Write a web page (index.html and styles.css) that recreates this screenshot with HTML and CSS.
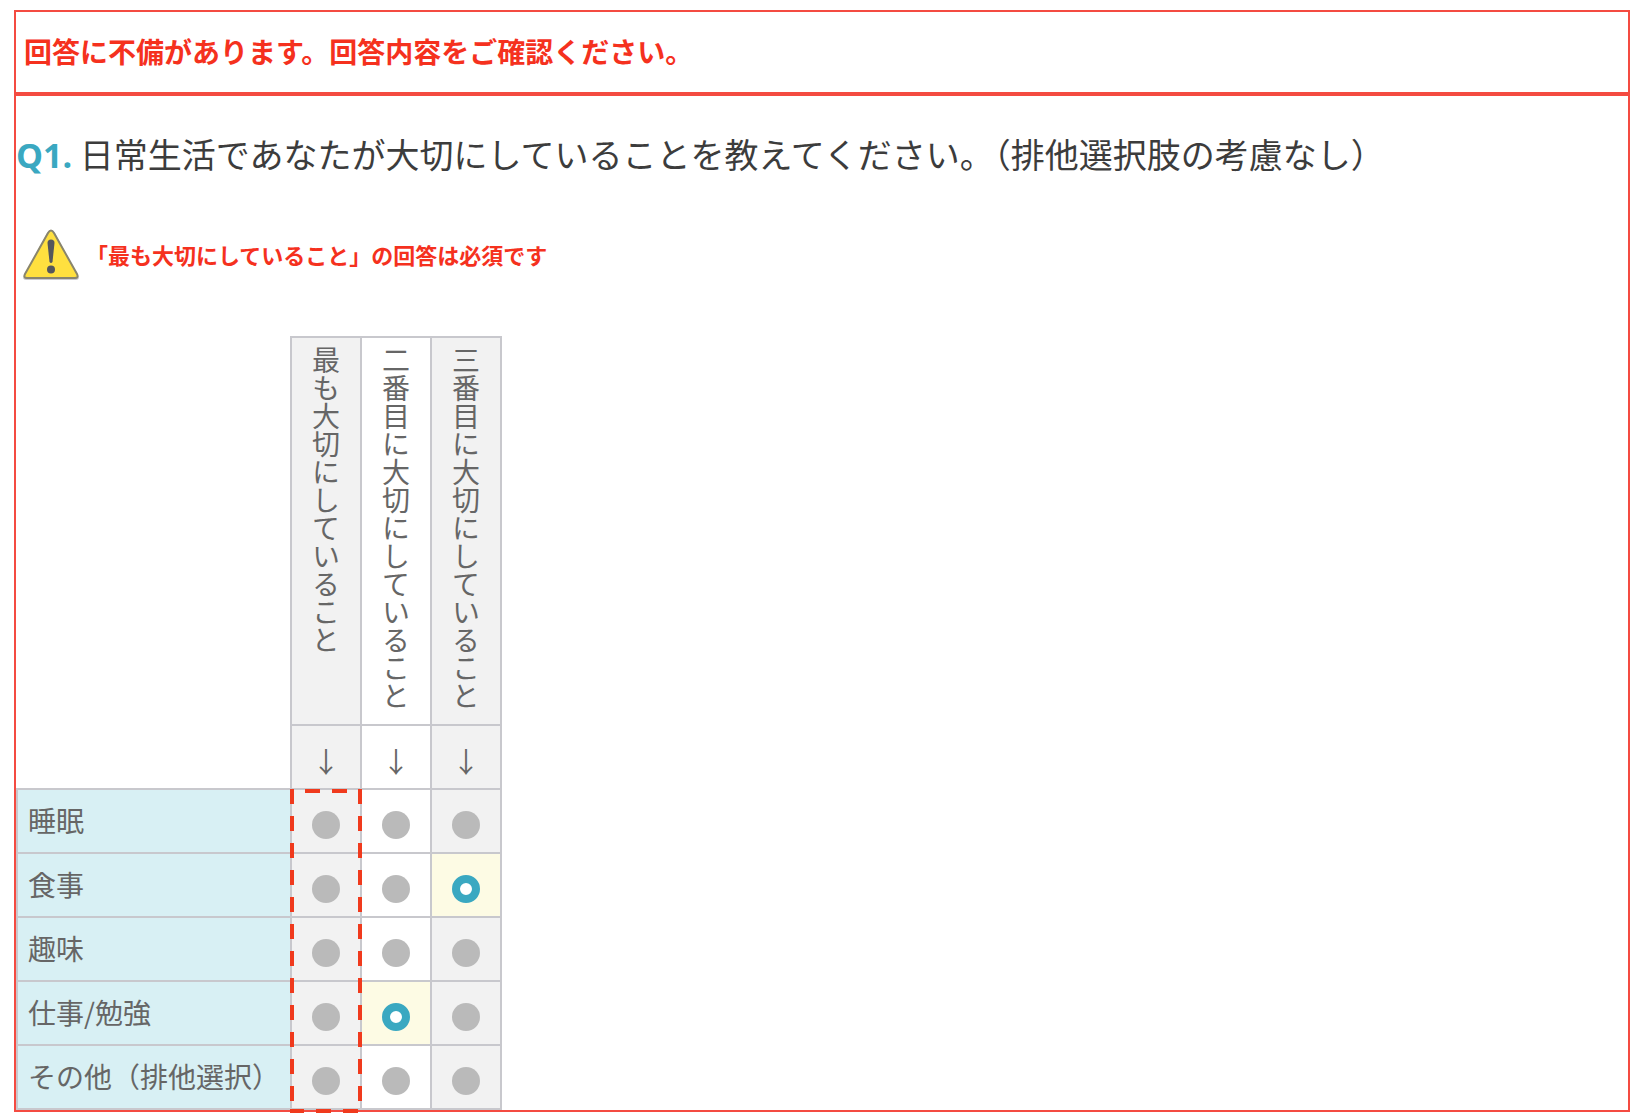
FILE: index.html
```html
<!DOCTYPE html>
<html lang="ja">

<head>
   <meta charset="UTF-8">
   <meta name="viewport" content="width=device-width, initial-scale=1.0">
   <title>アンケート</title>
   <link rel="stylesheet" href="styles.css">
</head>

<body>
   <main>
      <div class="alert" role="alert">
         <p>回答に不備があります。回答内容をご確認ください。</p>
      </div>
      <form class="question">
         <h1><span class="number">Q1.</span> 日常生活であなたが大切にしていることを教えてください。（排他選択肢の考慮なし）</h1>
         <div class="error">
            <svg class="warning" viewBox="0 0 58 54" aria-hidden="true">
               <path d="M4 53H54Q58 53 56 49L33 6Q29 0 25 6L2 49Q0 53 4 53Z" fill="#c9c9d2" />
               <path d="M5 51H53Q57 51 55 47L32 6Q29 1 26 6L3 47Q1 51 5 51Z" fill="#ffe03f" stroke="#89856d" stroke-width="2" />
               <path d="M25.500 16Q25.500 12.500 29 12.500T32.500 16L30.500 35Q29 37 27.500 35Z" fill="#55565c" />
               <circle cx="29" cy="42.500" r="4" fill="#55565c" />
            </svg>
            <p>「最も大切にしていること」の回答は必須です</p>
         </div>
         <div class="matrix">
            <table>
               <thead>
                  <tr>
                     <td class="blank" rowspan="2"></td>
                     <th class="rank" id="rank1" scope="col"><span>最も大切にしていること</span></th>
                     <th class="rank" id="rank2" scope="col"><span>二番目に大切にしていること</span></th>
                     <th class="rank" id="rank3" scope="col"><span>三番目に大切にしていること</span></th>
                  </tr>
                  <tr class="arrows">
                     <td>↓</td>
                     <td>↓</td>
                     <td>↓</td>
                  </tr>
               </thead>
               <tbody>
                  <tr>
                     <th id="item1" scope="row">睡眠</th>
                     <td><input type="radio" name="q1_1" value="1" aria-labelledby="item1 rank1"></td>
                     <td><input type="radio" name="q1_2" value="1" aria-labelledby="item1 rank2"></td>
                     <td><input type="radio" name="q1_3" value="1" aria-labelledby="item1 rank3"></td>
                  </tr>
                  <tr>
                     <th id="item2" scope="row">食事</th>
                     <td><input type="radio" name="q1_1" value="2" aria-labelledby="item2 rank1"></td>
                     <td><input type="radio" name="q1_2" value="2" aria-labelledby="item2 rank2"></td>
                     <td><input type="radio" name="q1_3" value="2" aria-labelledby="item2 rank3" checked></td>
                  </tr>
                  <tr>
                     <th id="item3" scope="row">趣味</th>
                     <td><input type="radio" name="q1_1" value="3" aria-labelledby="item3 rank1"></td>
                     <td><input type="radio" name="q1_2" value="3" aria-labelledby="item3 rank2"></td>
                     <td><input type="radio" name="q1_3" value="3" aria-labelledby="item3 rank3"></td>
                  </tr>
                  <tr>
                     <th id="item4" scope="row">仕事/勉強</th>
                     <td><input type="radio" name="q1_1" value="4" aria-labelledby="item4 rank1"></td>
                     <td><input type="radio" name="q1_2" value="4" aria-labelledby="item4 rank2" checked></td>
                     <td><input type="radio" name="q1_3" value="4" aria-labelledby="item4 rank3"></td>
                  </tr>
                  <tr>
                     <th id="item5" scope="row">その他（排他選択）</th>
                     <td><input type="radio" name="q1_1" value="5" aria-labelledby="item5 rank1"></td>
                     <td><input type="radio" name="q1_2" value="5" aria-labelledby="item5 rank2"></td>
                     <td><input type="radio" name="q1_3" value="5" aria-labelledby="item5 rank3"></td>
                  </tr>
               </tbody>
            </table>
            <div class="missing"></div>
         </div>
      </form>
   </main>
</body>

</html>
```
FILE: styles.css
```css
* {
   box-sizing: border-box;
   padding: 0;
   margin: 0;
}

body {
   background-color: #fff;
   color: #666;
   font-family: "Noto Sans CJK JP", sans-serif;
   font-size: 28px;
   line-height: 40px;
}

main {
   margin: 10px 8px 8px 14px;
}

.alert,
.question {
   border: 2px solid #f44b41;
}

.alert {
   padding: 19px 8px 21px;
   color: #f5311e;
   font-weight: 700;
}

.question {
   padding-top: 34px;
}

h1 {
   color: #3c3c3c;
   font-size: 34px;
   font-weight: 400;
   line-height: 48px;
}

.number {
   color: #3aa8c1;
   font-family: "Open Sans", sans-serif;
   font-weight: 700;
}

.error {
   display: flex;
   align-items: center;
   gap: 6px;
   margin: 48px 0 55px;
   padding-left: 6px;
   color: #f5311e;
   font-size: 22px;
   font-weight: 700;
}

.warning {
   width: 58px;
   height: 54px;
}

.matrix {
   position: relative;
   width: 486px;
}

table {
   width: 100%;
   border-collapse: collapse;
   table-layout: fixed;
}

th,
td {
   width: 70px;
   height: 64px;
   border: 2px solid #c8c8cd;
   font-weight: 400;
   text-align: center;
}

.blank {
   width: auto;
   border-top: none;
   border-left: none;
}

.rank {
   height: 388px;
   vertical-align: top;
}

.rank span {
   display: inline-block;
   padding-top: 8px;
   line-height: 28px;
   writing-mode: vertical-rl;
}

.rank,
.arrows td,
tbody td {
   background-color: #f2f2f2;
}

.rank:nth-child(3),
.arrows td:nth-child(2),
tbody td:nth-child(3) {
   background-color: #fff;
}

.arrows td {
   padding-top: 8px;
}

tbody th {
   padding: 0 0 2px 10px;
   background-color: #d8f0f4;
   text-align: left;
   white-space: nowrap;
}

input {
   display: block;
   width: 28px;
   height: 28px;
   margin: 8px auto 0;
   border-radius: 50%;
   background-color: #bababa;
   appearance: none;
   cursor: pointer;
}

input:checked {
   border: 8px solid #3aa8c1;
   background-color: #fff;
}

tbody td:has(input:checked) {
   background-color: #fdfbe4;
}

/* dashed frame round the column with no answer */
.missing {
   --dash: #f03a1d 0 15px, transparent 15px 27px;
   position: absolute;
   left: 274px;
   bottom: -3px;
   width: 72px;
   height: 324px;
   background:
      repeating-linear-gradient(to bottom, var(--dash)) left / 4px 100% no-repeat,
      repeating-linear-gradient(to bottom, var(--dash)) right / 4px 100% no-repeat,
      linear-gradient(to right, transparent 15px, #f03a1d 15px 30px, transparent 30px 42px, #f03a1d 42px 57px, transparent 57px) top / 100% 4px no-repeat,
      linear-gradient(to right, #f03a1d 14px, transparent 14px 26px, #f03a1d 26px 41px, transparent 41px 53px, #f03a1d 53px 68px, transparent 68px) bottom / 100% 4px no-repeat;
   pointer-events: none;
}
```
